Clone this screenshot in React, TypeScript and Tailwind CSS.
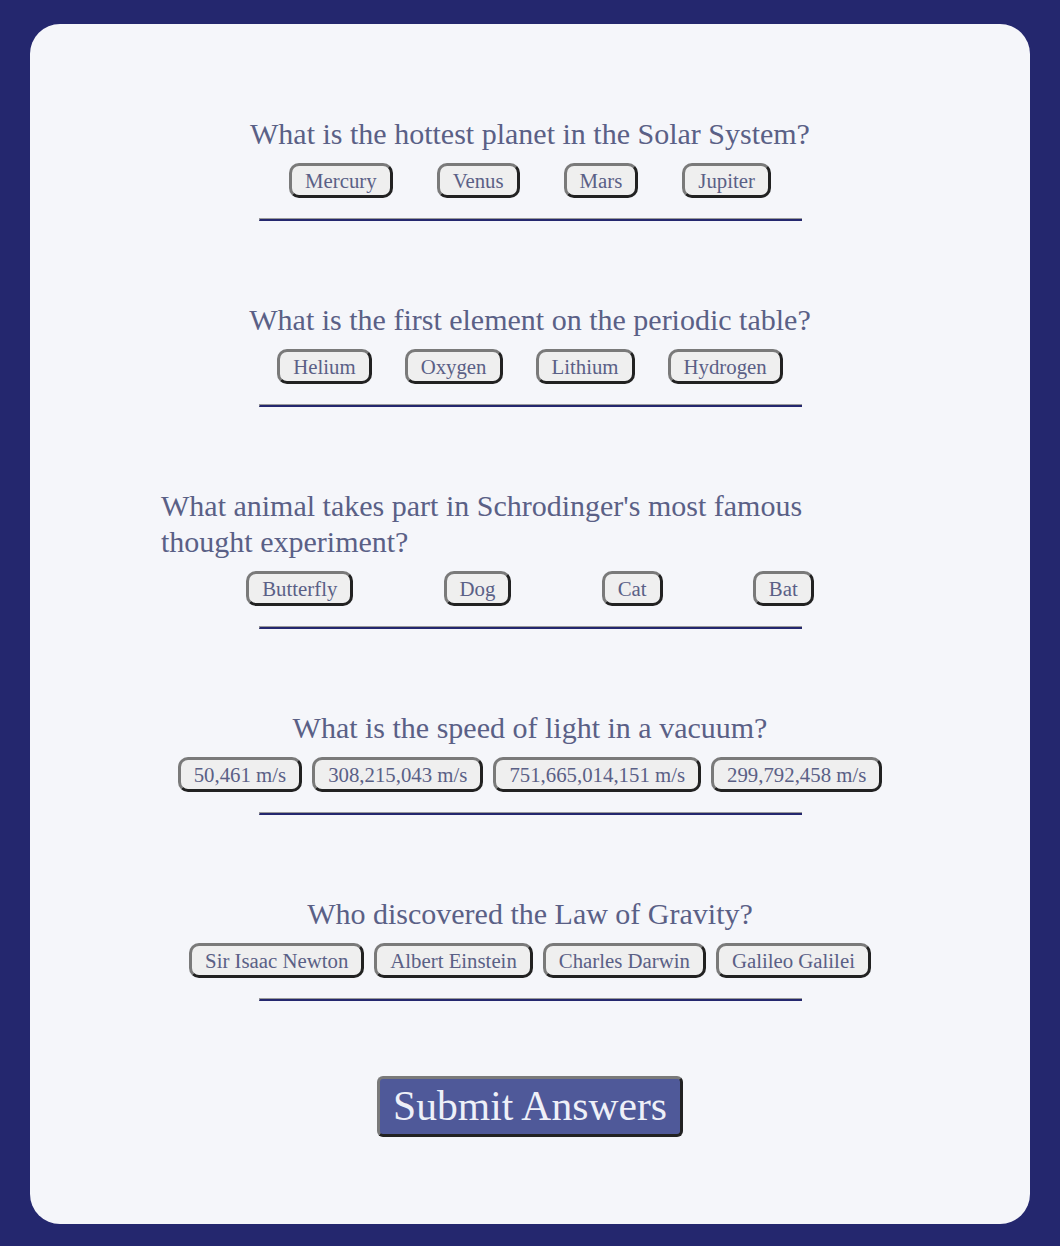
import React from "react";

type Q = { lines: string[]; answers: string[]; wide?: boolean };

const questions: Q[] = [
  {
    lines: ["What is the hottest planet in the Solar System?"],
    answers: ["Mercury", "Venus", "Mars", "Jupiter"],
  },
  {
    lines: ["What is the first element on the periodic table?"],
    answers: ["Helium", "Oxygen", "Lithium", "Hydrogen"],
  },
  {
    lines: ["What animal takes part in Schrodinger's most famous", "thought experiment?"],
    answers: ["Butterfly", "Dog", "Cat", "Bat"],
    wide: true,
  },
  {
    lines: ["What is the speed of light in a vacuum?"],
    answers: ["50,461 m/s", "308,215,043 m/s", "751,665,014,151 m/s", "299,792,458 m/s"],
  },
  {
    lines: ["Who discovered the Law of Gravity?"],
    answers: ["Sir Isaac Newton", "Albert Einstein", "Charles Darwin", "Galileo Galilei"],
  },
];

function Question({ q }: { q: Q }) {
  return (
    <div className="flex flex-col items-center">
      <div className={(q.wide ? "w-[748px]" : "w-fit max-w-[748px]") + " px-[5px]"}>
        <h2
          className={
            (q.wide ? "w-full" : "mx-auto w-fit") +
            " text-left text-[30px] leading-[36px] font-normal text-[#5a6086]"
          }
        >
          {q.lines.map((l, i) => (
            <React.Fragment key={i}>
              {i > 0 && <br />}
              {l}
            </React.Fragment>
          ))}
        </h2>
        <div className="mt-[11px] flex justify-evenly">
          {q.answers.map((a) => (
            <button
              key={a}
              className="mx-[5px] whitespace-nowrap rounded-[10px] border-[3px] border-t-[#7a7a7a] border-l-[#7a7a7a] border-b-[#222222] border-r-[#222222] bg-[#efefef] px-[13px] py-[3px] text-[20.8px] leading-[23px] text-[#5a6086]"
            >
              {a}
            </button>
          ))}
        </div>
      </div>
      <div className="mt-[20px] h-0 w-[543px] border-t border-l border-r-0 border-t-[#9a9a9a] border-l-[#9a9a9a] border-b-2 border-b-[#24276e]" />
    </div>
  );
}

export default function App() {
  return (
    <div
      className="min-h-[1246px] bg-[#24276e] px-[30px] pt-[24px] pb-[22px]"
      style={{ fontFamily: '"Liberation Serif", "Times New Roman", Times, serif' }}
    >
      <div className="flex flex-col items-center rounded-[30px] bg-[#f5f6fa] pt-[92px] pb-[87px]">
        <div className="flex flex-col gap-[81px]">
          {questions.map((q, i) => (
            <Question key={i} q={q} />
          ))}
        </div>
        <button className="mt-[75px] rounded-[6px] border-[3px] border-t-[#7a7a7a] border-l-[#7a7a7a] border-b-[#222222] border-r-[#222222] bg-[#4f5999] px-[13px] py-[4px] text-[41.6px] leading-[47px] text-[#eef0f8]">
          Submit Answers
        </button>
      </div>
    </div>
  );
}
